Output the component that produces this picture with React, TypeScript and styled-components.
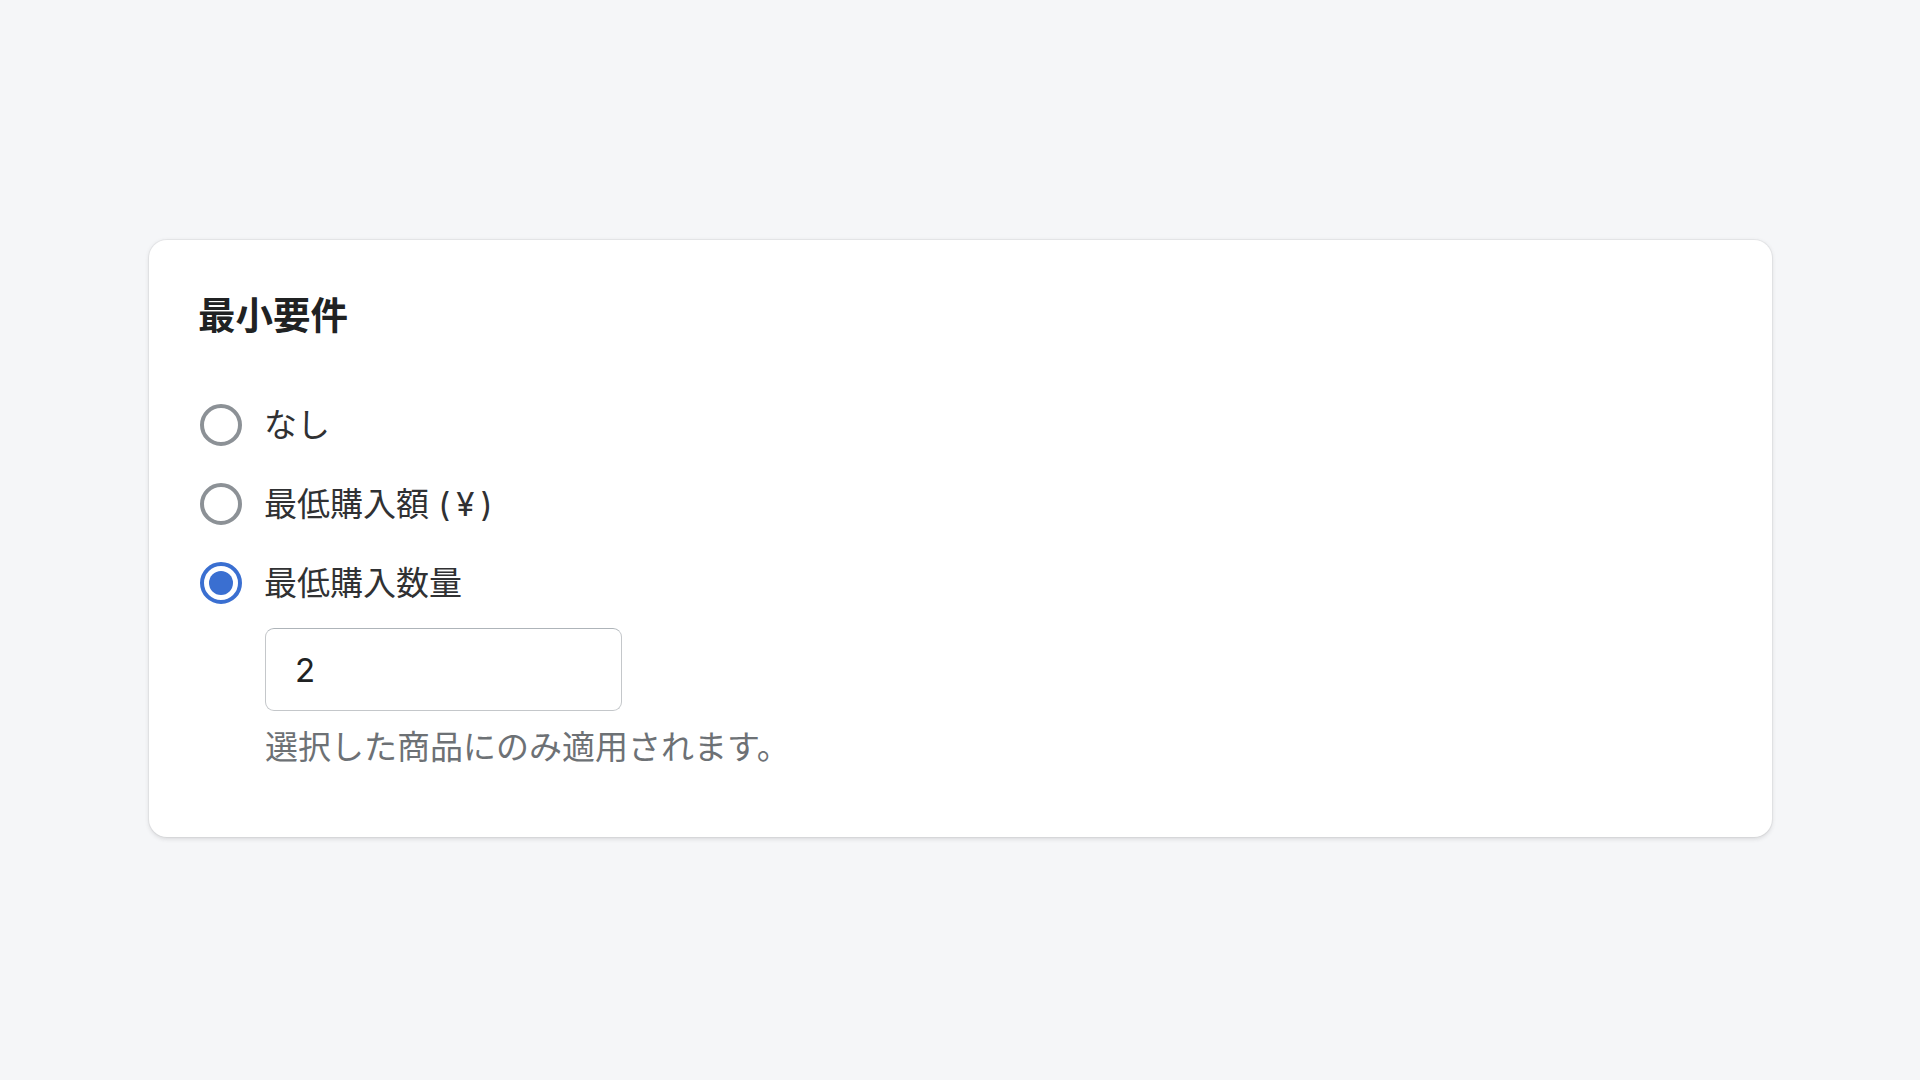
import React, { useState } from "react";
import styled, { createGlobalStyle } from "styled-components";

const GlobalStyle = createGlobalStyle`
  html, body {
    margin: 0;
    padding: 0;
    background: #f5f6f8;
  }
  body {
    font-family: "Inter", "Noto Sans CJK JP", "Noto Sans", sans-serif;
    color: #202223;
  }
  * { box-sizing: border-box; }
`;

const Page = styled.div`
  min-height: 1080px;
  padding: 240px 148px 0 149px;
`;

const Card = styled.section`
  background: #ffffff;
  border-radius: 18px;
  box-shadow: 0 0 0 1px rgba(63, 63, 68, 0.05), 0 1.5px 4.5px rgba(63, 63, 68, 0.16);
  padding: 48px 48px 66px 49px;
  height: 597px;
`;

const Title = styled.h2`
  margin: 0;
  font-family: "Inter", "Noto Sans CJK JP", sans-serif;
  font-size: 37.5px;
  font-weight: 700;
  line-height: 56px;
  color: #202223;
`;

const Group = styled.div`
  margin-top: 57px;
  display: flex;
  flex-direction: column;
  gap: 31px;
`;

const Row = styled.label`
  display: flex;
  align-items: center;
  gap: 22px;
  height: 48px;
  cursor: pointer;
`;

const Radio = styled.span<{ $checked: boolean }>`
  flex: none;
  width: 42px;
  height: 42px;
  margin-left: 2px;
  border-radius: 50%;
  border: 4.5px solid ${(p) => (p.$checked ? "#3a6fd1" : "#8c9196")};
  background: #ffffff;
  display: flex;
  align-items: center;
  justify-content: center;
  &::after {
    content: "";
    width: 24px;
    height: 24px;
    border-radius: 50%;
    background: ${(p) => (p.$checked ? "#3a6fd1" : "transparent")};
  }
`;

const Label = styled.span`
  font-size: 33px;
  line-height: 48px;
  color: #303133;
`;

const Yen = styled.span`
  padding: 0 6px;
`;

const Nested = styled.div`
  margin-left: 67px;
  margin-top: 21px;
  display: flex;
  flex-direction: column;
`;

const Input = styled.input`
  width: 357px;
  height: 83px;
  border: 1.5px solid #c4c7ca;
  border-top-color: #aeb4b9;
  border-radius: 9px;
  padding: 0 0 0 29px;
  font-family: "Inter", "Noto Sans CJK JP", sans-serif;
  font-size: 33px;
  color: #202223;
  background: #ffffff;
  outline: none;
`;

const Help = styled.p`
  margin: 12px 0 0;
  font-size: 33px;
  line-height: 48px;
  color: #6d7175;
`;

const options: React.ReactNode[] = [
  "なし",
  <>
    最低購入額 (<Yen>¥</Yen>)
  </>,
  "最低購入数量",
];

export default function App() {
  const [selected, setSelected] = useState(2);
  const [value, setValue] = useState("2");
  return (
    <>
      <GlobalStyle />
      <Page>
        <Card>
          <Title>最小要件</Title>
          <Group>
            {options.map((o, i) => (
              <Row key={i} onClick={() => setSelected(i)}>
                <Radio $checked={selected === i} />
                <Label>{o}</Label>
              </Row>
            ))}
          </Group>
          {selected === 2 && (
            <Nested>
              <Input value={value} onChange={(e) => setValue(e.target.value)} />
              <Help>選択した商品にのみ適用されます。</Help>
            </Nested>
          )}
        </Card>
      </Page>
    </>
  );
}
